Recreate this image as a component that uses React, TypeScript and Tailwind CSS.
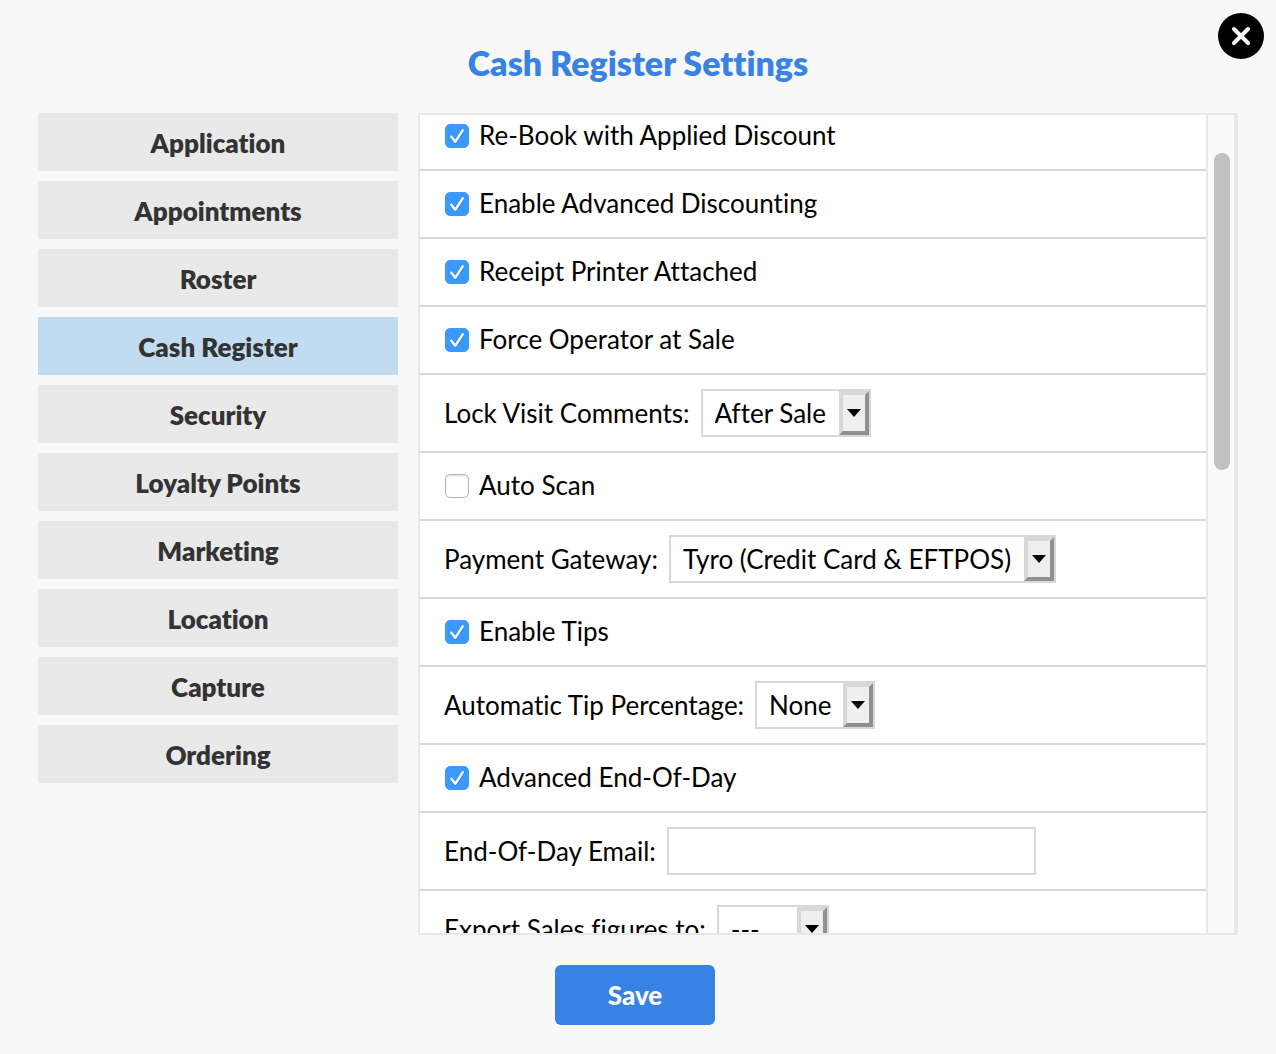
import { useState } from "react";

interface CheckSetting {
  kind: "check";
  id: string;
  label: string;
  checked: boolean;
}

interface SelectSetting {
  kind: "select";
  id: string;
  label: string;
  options: string[];
  width: string;
}

interface TextSetting {
  kind: "text";
  id: string;
  label: string;
}

type Setting = CheckSetting | SelectSetting | TextSetting;

const SECTIONS = [
  "Application",
  "Appointments",
  "Roster",
  "Cash Register",
  "Security",
  "Loyalty Points",
  "Marketing",
  "Location",
  "Capture",
  "Ordering",
];

const SETTINGS: Setting[] = [
  { kind: "check", id: "rebook", label: "Re-Book with Applied Discount", checked: true },
  { kind: "check", id: "discounting", label: "Enable Advanced Discounting", checked: true },
  { kind: "check", id: "printer", label: "Receipt Printer Attached", checked: true },
  { kind: "check", id: "operator", label: "Force Operator at Sale", checked: true },
  { kind: "select", id: "lock", label: "Lock Visit Comments:", options: ["After Sale"], width: "w-[170px]" },
  { kind: "check", id: "scan", label: "Auto Scan", checked: false },
  { kind: "select", id: "gateway", label: "Payment Gateway:", options: ["Tyro (Credit Card & EFTPOS)"], width: "w-[387px]" },
  { kind: "check", id: "tips", label: "Enable Tips", checked: true },
  { kind: "select", id: "tip-percent", label: "Automatic Tip Percentage:", options: ["None"], width: "w-[120px]" },
  { kind: "check", id: "eod", label: "Advanced End-Of-Day", checked: true },
  { kind: "text", id: "eod-email", label: "End-Of-Day Email:" },
  { kind: "select", id: "export", label: "Export Sales figures to:", options: ["---"], width: "w-[112px]" },
];

export default function App() {
  const [section, setSection] = useState("Cash Register");

  return (
    <div className="relative flex h-screen flex-col bg-[#f8f8f8] px-[38px] font-['Lato',sans-serif] text-[26px] leading-8 text-black [font-variant-ligatures:none]">
      <header className="flex h-[113px] shrink-0 items-center justify-center pt-3">
        <h1 className="text-[34px] leading-10 font-extrabold text-[#3982e5]">Cash Register Settings</h1>
      </header>
      <button type="button" aria-label="Close" className="absolute top-[13px] right-3 rounded-full bg-black">
        <svg width="46" height="46" viewBox="0 0 46 46" fill="none" stroke="#f8f8f8" strokeWidth="4" strokeLinecap="round">
          <path d="M16 16 30 30M30 16 16 30" />
        </svg>
      </button>

      <main className="flex min-h-0 flex-1 gap-5">
        <nav className="flex w-[360px] shrink-0 flex-col gap-2.5">
          {SECTIONS.map((s) => (
            <button
              key={s}
              type="button"
              onClick={() => setSection(s)}
              className={`h-[58px] shrink-0 pt-0.5 font-extrabold text-[#333] ${s === section ? "bg-[#c1dcf0]" : "bg-[#e9e9e9]"}`}
            >
              {s}
            </button>
          ))}
        </nav>

        <div className="flex min-w-0 flex-1 border-2 border-r-4 border-[#e8e8e8] bg-white">
          <div className="min-w-0 flex-1 overflow-hidden">
            <div className="-mt-3">
              {SETTINGS.map((s) => (
                <SettingRow key={s.id} setting={s} />
              ))}
            </div>
          </div>
          <div className="w-7 shrink-0 border-l-2 border-[#e8e8e8] bg-[#fafafa] px-1.5 pt-[38px] pr-1">
            <div className="h-[317px] w-4 rounded-full bg-[#c1c1c1]" />
          </div>
        </div>
      </main>

      <footer className="flex h-[119px] shrink-0 items-start justify-center pt-[30px] pr-1.5">
        <button type="button" className="h-[60px] w-40 rounded-md bg-[#3982e5] font-black text-white">
          Save
        </button>
      </footer>
    </div>
  );
}

function SettingRow({ setting }: { setting: Setting }) {
  if (setting.kind === "check") {
    return (
      <div className="flex h-[68px] items-center border-b-2 border-[#d8d8d8] px-6">
        <CheckBox id={setting.id} initial={setting.checked} />
        <label htmlFor={setting.id} className="pb-0.5 pl-2.5">{setting.label}</label>
      </div>
    );
  }
  return (
    <div className="flex h-[78px] items-center gap-[11px] border-b-2 border-[#d8d8d8] px-6">
      <label htmlFor={setting.id}>{setting.label}</label>
      {setting.kind === "text" ? (
        <input id={setting.id} type="email" className="h-12 w-[369px] border-2 border-[#d8d8d8] bg-white px-3 outline-none" />
      ) : (
        <div className={`relative h-12 ${setting.width}`}>
          <select id={setting.id} className="h-12 w-full appearance-none border-2 border-[#d8d8d8] bg-white pl-3 outline-none">
            {setting.options.map((o) => (
              <option key={o}>{o}</option>
            ))}
          </select>
          <span className="pointer-events-none absolute inset-y-0.5 right-0.5 flex w-[30px] items-center justify-center border-4 border-t-[#d8d8d8] border-r-[#909090] border-b-[#909090] border-l-[#d8d8d8] bg-[#efefef]">
            <svg width="14" height="8" viewBox="0 0 14 8">
              <path d="M0 0h14L7 8z" />
            </svg>
          </span>
        </div>
      )}
    </div>
  );
}

function CheckBox({ id, initial }: { id: string; initial: boolean }) {
  const [checked, setChecked] = useState(initial);

  return (
    <span className="relative ml-px h-6 w-6 shrink-0">
      <input
        id={id}
        type="checkbox"
        checked={checked}
        onChange={(e) => setChecked(e.target.checked)}
        className="block h-6 w-6 appearance-none rounded-[5px] border border-[#b4b4b4] bg-white shadow-[inset_0_1px_2px_#ddd] checked:border-[#3b99fc] checked:bg-[#3b99fc] checked:shadow-none"
      />
      {checked && (
        <svg className="pointer-events-none absolute inset-0" width="24" height="24" viewBox="0 0 24 24" fill="none" strokeLinecap="round" strokeLinejoin="round" strokeWidth="2.4">
          <path d="M6.5 14 10.5 19 18 7.5" stroke="#2f83dd" />
          <path d="M6.3 12.8 10.3 17.8 17.7 6.3" stroke="#fff" />
        </svg>
      )}
    </span>
  );
}
